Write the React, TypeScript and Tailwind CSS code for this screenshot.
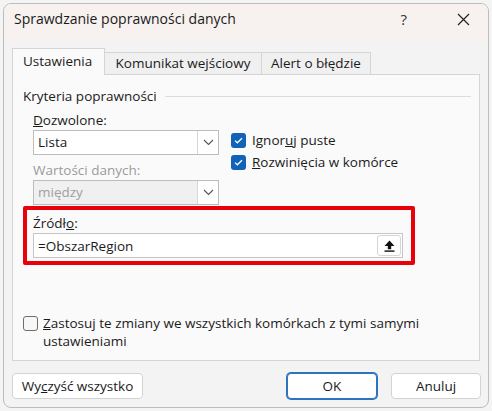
import React from 'react';

const font = { fontFamily: '"Segoe UI", "Open Sans", "Noto Sans", sans-serif' };

const Check = ({ checked }: { checked: boolean }) =>
  checked ? (
    <span className="flex size-[15px] shrink-0 items-center justify-center rounded-[3px] bg-[#1163b8]">
      <svg width="9" height="7" viewBox="0 0 9 7" fill="none">
        <path d="M1 3.6 3.3 5.8 8 1.2" stroke="white" strokeWidth="1.3" />
      </svg>
    </span>
  ) : (
    <span className="block size-[15px] shrink-0 rounded-[3px] border border-[#6e6e6e] bg-[#f7f7f7]" />
  );

const Chevron = () => (
  <svg width="11" height="7" viewBox="0 0 11 7" fill="none">
    <path d="M1 1l4.5 4.5L10 1" stroke="#555" strokeWidth="1.1" />
  </svg>
);

const Combo = ({ value, disabled }: { value: string; disabled?: boolean }) => (
  <div
    className={`flex h-[25px] w-[186px] border border-[#bdbdbd] ${
      disabled ? 'bg-[#f0f0f0] text-[#a0a0a0]' : 'bg-white text-[#1a1a1a]'
    }`}
  >
    <span className="flex-1 pl-[4px] leading-[23px]">{value}</span>
    <span className="flex w-[21px] items-center justify-center border-l border-[#d6d6d6] bg-white">
      <Chevron />
    </span>
  </div>
);

const Button = ({ children, primary, w }: { children: React.ReactNode; primary?: boolean; w: string }) => (
  <button
    className={`h-[26px] ${w} rounded-[4px] border bg-white text-[13.5px] text-[#1a1a1a] ${
      primary ? 'border-[#2d73c0] ring-1 ring-[#2d73c0]' : 'border-[#d3d3d3]'
    }`}
  >
    {children}
  </button>
);

export default function App() {
  return (
    <div className="h-[411px] w-[492px] bg-[#f4f4f4] pl-[3px] pt-[3px]" style={font}>
      <div className="flex h-[405px] w-[486px] flex-col overflow-hidden rounded-[8px] border border-[#bcbcbc] bg-[#f3f3f3] text-[13.5px] text-[#1a1a1a]">
        {/* title bar */}
        <div className="flex h-[38px] items-start bg-[#f7f1ef] pl-[10px] pt-[5px]">
          <span className="text-[14px] leading-[20px]">Sprawdzanie poprawności danych</span>
          <span className="ml-auto mr-[50px] text-[15px] leading-[20px] text-[#333]">?</span>
          <svg className="mr-[18px] mt-[4px]" width="13" height="13" viewBox="0 0 13 13">
            <path d="M1 1l11 11M12 1 1 12" stroke="#222" strokeWidth="1.2" />
          </svg>
        </div>

        {/* tabs */}
        <div className="mt-[6px] flex items-end pl-[8px]">
          <div className="relative z-10 -mb-px h-[27px] w-[93px] border border-b-0 border-[#d5d5d5] bg-[#fafafa] pl-[10px] leading-[25px]">
            Ustawienia
          </div>
          <div className="h-[22px] w-[157px] border-t border-r border-[#d5d5d5] bg-[#f0f0f0] text-center leading-[21px]">
            Komunikat wejściowy
          </div>
          <div className="h-[22px] w-[109px] border-t border-r border-[#d5d5d5] bg-[#f0f0f0] text-center leading-[21px]">
            Alert o błędzie
          </div>
        </div>

        {/* settings panel */}
        <div className="ml-[8px] flex h-[287px] w-[468px] flex-col border border-[#d5d5d5] bg-[#fafafa] pl-[10px] pt-[11px]">
          <div className="flex items-center">
            <span>Kryteria poprawności</span>
            <span className="ml-[8px] mr-[8px] h-px flex-1 bg-[#dcdcdc]" />
          </div>

          <div className="flex pl-[10px]">
            <div className="flex flex-col">
              <span className="mt-[5px] leading-[19px]">
                <u>D</u>ozwolone:
              </span>
              <Combo value="Lista" />
              <span className="mt-[6px] leading-[19px] text-[#9a9a9a]">Wartości danych:</span>
              <Combo value="między" disabled />
            </div>
            <div className="ml-[12px] mt-[27px] flex flex-col gap-[7px]">
              <label className="flex items-center gap-[6px]">
                <Check checked />
                <span className="leading-[15px]">
                  Ignor<u>u</u>j puste
                </span>
              </label>
              <label className="flex items-center gap-[6px]">
                <Check checked />
                <span className="leading-[15px]">
                  <u>R</u>ozwinięcia w komórce
                </span>
              </label>
            </div>
          </div>

          {/* source field */}
          <div className="mt-px h-[59px] w-[392px] rounded-[2px] border-[4px] border-[#e8000b] pl-[6px] pt-[4px]">
            <span className="block leading-[18px]">
              Źródł<u>o</u>:
            </span>
            <div className="mt-px flex h-[25px] w-[370px] items-center border border-[#c6c6c6] bg-white pl-[4px] pr-px">
              <span className="flex-1">=ObszarRegion</span>
              <span className="flex h-[21px] w-[24px] items-center justify-center rounded-[3px] border border-[#d6d6d6] bg-white">
                <svg width="11" height="12" viewBox="0 0 11 12">
                  <path d="M5.5 0.5 10.5 6H7.2v3.2H3.8V6H0.5z" fill="#111" />
                  <rect x="0.5" y="10.4" width="10" height="1.4" fill="#111" />
                </svg>
              </span>
            </div>
          </div>

          <label className="mt-[49px] flex items-start gap-[5px]">
            <span className="mt-[2px]">
              <Check checked={false} />
            </span>
            <span className="flex flex-col leading-[18px]">
              <span>
                <u>Z</u>astosuj te zmiany we wszystkich komórkach z tymi samymi
              </span>
              <span>ustawieniami</span>
            </span>
          </label>
        </div>

        {/* buttons */}
        <div className="mt-[12px] flex pl-[8px]">
          <Button w="w-[131px]">
            Wy<u>c</u>zyść wszystko
          </Button>
          <span className="ml-auto" />
          <Button w="w-[90px]" primary>
            OK
          </Button>
          <span className="ml-[14px] mr-[7px]">
            <Button w="w-[90px]">Anuluj</Button>
          </span>
        </div>
      </div>
    </div>
  );
}
